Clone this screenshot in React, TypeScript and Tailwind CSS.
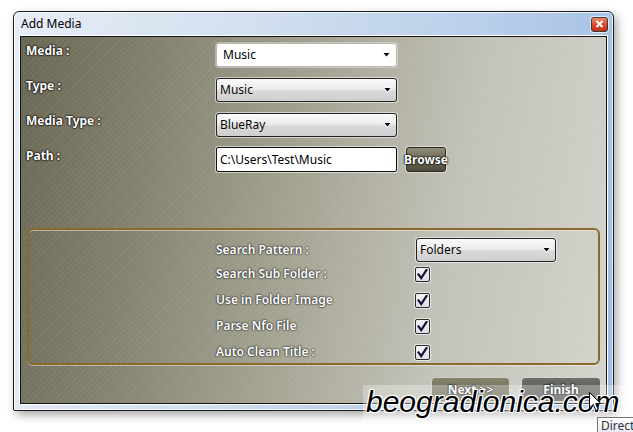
import React, { FC } from "react";

const font = "font-['Noto_Sans','Open_Sans',sans-serif]";
const outline = "[text-shadow:0_0_1px_#000,0_0_2px_#000,0_0_2px_#111]";
const softOutline = "[text-shadow:0_0_1px_#333,0_0_2px_#333,0_0_2px_#444]";

const Arrow: FC<{ light?: boolean }> = ({ light }) => (
  <svg width="9" height="6" viewBox="0 0 9 6" className="shrink-0">
    {light && <path d="M0 0.5 H9 L4.5 6 Z" fill="#fff" />}
    <path d="M1.5 1 H7.5 L4.5 4.5 Z" fill="#000" />
  </svg>
);

const FlatCombo: FC<{ value: string }> = ({ value }) => (
  <div className="w-[181px] h-[24px] flex items-center justify-between pl-[6px] pr-[5px] bg-white rounded-[3px] border border-[#b9b9b0] shadow-[0_0_0_1px_rgba(255,255,255,0.35)]">
    <span className="text-[12px] text-black">{value}</span>
    <Arrow />
  </div>
);

const Combo: FC<{ value: string; width: string }> = ({ value, width }) => (
  <div className={`${width} h-[24px] flex items-center justify-between pl-[3px] pr-[4px] rounded-[3px] border border-[#222] bg-[linear-gradient(180deg,#fbfbfb_0%,#ececec_45%,#d9d9d9_55%,#cfcfcf_100%)] shadow-[0_0_0_1px_rgba(255,255,255,0.55)]`}>
    <span className="text-[12px] text-black [text-shadow:0_0_1px_#fff]">{value}</span>
    <Arrow light />
  </div>
);

const Check: FC = () => (
  <div className="w-[15px] h-[15px] flex items-center justify-center rounded-[2px] border border-[#2b2b2b] bg-[linear-gradient(180deg,#f4f4f4,#dedfe6)] shadow-[0_0_0_1px_rgba(255,255,255,0.6)]">
    <svg width="11" height="11" viewBox="0 0 11 11">
      <path d="M1.5 5.5 L4.2 9 L9.5 1" stroke="#12123a" strokeWidth="2.2" fill="none" strokeLinecap="square" />
    </svg>
  </div>
);

const CloseButton: FC = () => (
  <div className="w-[17px] h-[15px] -mr-[1px] flex items-center justify-center rounded-[3px] border border-[#3b3b3b] bg-[linear-gradient(180deg,#f08a6d_0%,#de4a2a_50%,#c33214_100%)] shadow-[0_0_0_1px_rgba(255,255,255,0.6)]">
    <svg width="9" height="8" viewBox="0 0 9 8">
      <path d="M1.5 1 L7.5 7 M7.5 1 L1.5 7" stroke="#fff" strokeWidth="2" />
    </svg>
  </div>
);

const Row: FC<{ label: string; children: React.ReactNode }> = ({ label, children }) => (
  <div className="flex items-start">
    <span className={`w-[190px] text-[12px] leading-[16px] font-bold text-white ${outline}`}>{label}</span>
    {children}
  </div>
);

const CheckRow: FC<{ label: string }> = ({ label }) => (
  <div className="h-[26px] flex items-center">
    <span className={`w-[199px] text-[12px] font-semibold text-white ${softOutline}`}>{label}</span>
    <Check />
  </div>
);

const App: FC = () => {
  return (
    <div className={`relative w-[633px] h-[432px] bg-white overflow-hidden pl-[13px] pt-[11px] ${font}`}>
      <div className="w-[601px] h-[400px] flex flex-col border border-[#1d1d1d] rounded-t-[6px] rounded-b-[2px] px-[6px] pb-[6px] bg-[linear-gradient(100deg,#e6edf6_0%,#d3e0ef_35%,#b9cfea_70%,#a2bde2_100%)] shadow-[3px_4px_10px_rgba(0,0,0,0.35),inset_0_0_0_1px_rgba(255,255,255,0.75)]">
        <div className="h-[24px] shrink-0 flex items-center justify-between pl-[1px]">
          <span className="text-[12px] text-black">Add Media</span>
          <CloseButton />
        </div>
        <div className="flex-1 border border-[#141414] shadow-[0_0_0_1px_#ffffff] bg-[linear-gradient(100deg,#6a6754_0%,#84826f_22%,#a6a594_48%,#c3c2b9_72%,#d4d3cc_100%)]">
          <div className="w-full h-full flex flex-col pl-[5px] pr-[5px] pt-[6px] bg-[repeating-linear-gradient(135deg,rgba(255,255,255,0.05)_0px,rgba(255,255,255,0.05)_1px,transparent_1px,transparent_4px)]">
            <div className="flex flex-col gap-[11px]">
              <Row label="Media :">
                <FlatCombo value="Music" />
              </Row>
              <Row label="Type :">
                <Combo value="Music" width="w-[181px]" />
              </Row>
              <Row label="Media Type :">
                <Combo value="BlueRay" width="w-[181px]" />
              </Row>
              <Row label="Path :">
                <div className="flex items-center gap-[9px] -mt-[1px]">
                  <div className="w-[181px] h-[25px] flex items-center pl-[3px] bg-white rounded-[2px] border border-[#111] shadow-[0_0_0_1px_rgba(255,255,255,0.55)]">
                    <span className="text-[12px] text-black">C:\Users\Test\Music</span>
                  </div>
                  <div className={`w-[40px] h-[25px] flex items-center justify-center rounded-[3px] border border-[#2a2a22] bg-[linear-gradient(180deg,#8f8d76_0%,#6d6b57_50%,#4d4b3b_100%)] shadow-[0_0_0_1px_rgba(255,255,255,0.45)] text-[12px] font-bold text-white ${outline}`}>
                    Browse
                  </div>
                </div>
              </Row>
            </div>

            <div className="mt-[56px] mx-[1px] h-[137px] shrink-0 rounded-[6px] border-2 border-[#8a6a2b] shadow-[0_1px_0_rgba(255,255,255,0.45),inset_0_1px_0_rgba(255,255,255,0.45)] pl-[187px] pt-[7px]">
              <div className="h-[26px] flex items-center">
                <span className={`w-[200px] text-[12px] font-semibold text-white ${softOutline}`}>Search Pattern :</span>
                <Combo value="Folders" width="w-[140px]" />
              </div>
              <div className="-mt-[2px]">
                <CheckRow label="Search Sub Folder :" />
                <CheckRow label="Use in Folder Image" />
                <CheckRow label="Parse Nfo File" />
                <CheckRow label="Auto Clean Title :" />
              </div>
            </div>

            <div className="mt-[12px] flex justify-end gap-[11px]">
              <div className={`w-[79px] h-[25px] flex items-center justify-center rounded-t-[4px] rounded-b-[2px] border border-[#cfcfc7] bg-[linear-gradient(180deg,#85846c_0%,#747360_50%,#6a6955_100%)] text-[12px] font-bold text-white ${outline}`}>
                Next &gt;&gt;
              </div>
              <div className={`w-[80px] h-[25px] flex items-center justify-center rounded-t-[4px] rounded-b-[2px] border border-[#d4d4ce] bg-[linear-gradient(180deg,#6e6e6a_0%,#5e5e5a_50%,#555551_100%)] text-[12px] font-bold text-white ${outline}`}>
                Finish
              </div>
            </div>
          </div>
        </div>
      </div>

      {/* watermark band */}
      <div className="absolute left-[363px] top-[385px] w-[268px] h-[43px] bg-[rgba(255,255,255,0.3)] overflow-hidden">
        <span className="absolute left-[3px] -top-[6px] font-['Liberation_Sans',sans-serif] italic text-[30px] text-black [text-shadow:0_0_1px_#fff,0_0_2px_#fff,1px_1px_0_#fff,-1px_-1px_0_#fff,1px_-1px_0_#fff,-1px_1px_0_#fff]">
          beogradionica.com
        </span>
      </div>

      {/* mouse pointer */}
      <svg className="absolute left-[589px] top-[392px]" width="13" height="20" viewBox="0 0 13 20">
        <path d="M0.5 0.5 L0.5 16 L4.3 12.5 L6.8 18.5 L9.2 17.5 L6.7 11.6 L11.8 11.6 Z" fill="#fff" stroke="#000" strokeWidth="1" strokeLinejoin="round" />
      </svg>

      {/* tooltip */}
      <div className="absolute left-[597px] top-[417px] w-[40px] h-[18px] border border-[#767676] bg-[linear-gradient(180deg,#ffffff,#e4e5f0)] pl-[3px] text-[12px] leading-[15px] text-[#333]">
        Direct
      </div>
    </div>
  );
};

export default App;
